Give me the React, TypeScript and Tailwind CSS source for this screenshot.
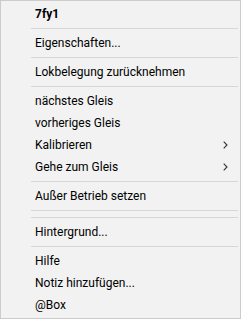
import React from 'react';

type Entry = { label?: string; bold?: boolean; sub?: boolean; sep?: boolean };

const entries: Entry[] = [
  { label: '7fy1', bold: true },
  { sep: true },
  { label: 'Eigenschaften...' },
  { sep: true },
  { label: 'Lokbelegung zurücknehmen' },
  { sep: true },
  { label: 'nächstes Gleis' },
  { label: 'vorheriges Gleis' },
  { label: 'Kalibrieren', sub: true },
  { label: 'Gehe zum Gleis', sub: true },
  { sep: true },
  { label: 'Außer Betrieb setzen' },
  { sep: true },
  { sep: true },
  { label: 'Hintergrund...' },
  { sep: true },
  { label: 'Hilfe' },
  { label: 'Notiz hinzufügen...' },
  { label: '@Box' },
];

const Chevron = () => (
  <svg width="5" height="8" viewBox="0 0 5 8" className="absolute right-[12px] top-[7px]">
    <path d="M0.7 0.6 L4 4 L0.7 7.4" fill="none" stroke="#333" strokeWidth="1.1" />
  </svg>
);

export default function App() {
  return (
    <div className="w-[241px] h-[319px] bg-[#f2f2f2] border border-[#cccccc] py-[2px] text-[12px] text-black font-[Roboto,'Liberation_Sans',sans-serif]">
      {entries.map((e, i) =>
        e.sep ? (
          <div key={i} className="h-[7px] flex items-start pt-[3px]">
            <div className="h-px flex-1 ml-[30px] mr-[2px] bg-[#d7d7d7]" />
          </div>
        ) : (
          <div key={i} className="relative h-[22px] flex items-center pl-[34px]">
            <span className={e.bold ? 'font-bold' : ''}>{e.label}</span>
            {e.sub && <Chevron />}
          </div>
        )
      )}
    </div>
  );
}
